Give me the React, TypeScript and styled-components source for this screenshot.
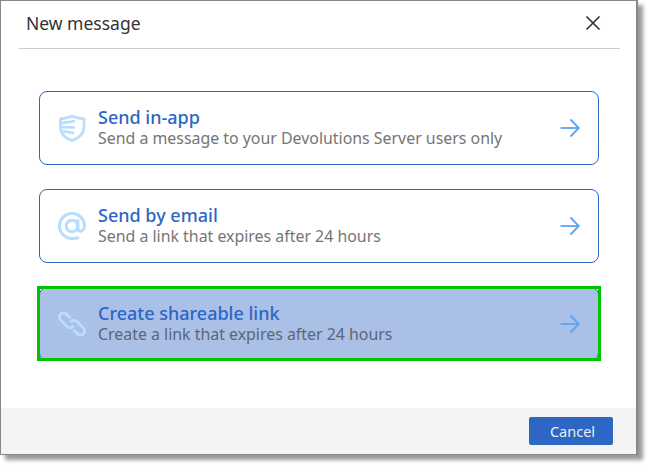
import React from 'react';
import styled, { createGlobalStyle } from 'styled-components';

const Global = createGlobalStyle`
  html, body {
    margin: 0;
    padding: 0;
    background: #fff;
    min-height: 465px;
    font-family: "Noto Sans", "Open Sans", sans-serif;
  }
`;

const Dialog = styled.div`
  box-sizing: border-box;
  width: 638px;
  height: 455px;
  border: 1px solid #888;
  border-right-width: 2px;
  background: #fff;
  display: flex;
  flex-direction: column;
  box-shadow: 5px 5px 4px rgba(0, 0, 0, 0.4);
`;

const Header = styled.div`
  box-sizing: border-box;
  height: 48px;
  margin: 0 16px 0 18px;
  padding: 0 17px 0 7px;
  border-bottom: 1px solid #ccc;
  display: flex;
  align-items: center;
  justify-content: space-between;
  flex-shrink: 0;
`;

const Title = styled.div`
  font-size: 17.5px;
  color: #333;
  margin-top: -3px;
`;

const CloseButton = styled.button`
  width: 20px;
  height: 20px;
  border: 0;
  padding: 0;
  background: none;
  display: flex;
  color: #333;
  margin-top: -4px;
`;

const Options = styled.div`
  flex: 1;
  display: flex;
  flex-direction: column;
  gap: 24px;
  padding: 42px 37px 0 38px;
`;

const Option = styled.div<{ $selected?: boolean }>`
  box-sizing: border-box;
  height: 74px;
  border: 1px solid #2d66c3;
  border-radius: 8px;
  display: flex;
  align-items: center;
  padding: 0 18px 0 18px;
  position: relative;
  background: ${(p) => (p.$selected ? '#abc0e6' : '#fff')};
  ${(p) =>
    p.$selected &&
    `&::after {
      content: '';
      position: absolute;
      top: -2px;
      left: -3px;
      right: -3px;
      bottom: -1px;
      border: 3px solid #00c400;
    }`}
`;

const OptionIcon = styled.div`
  width: 28px;
  height: 28px;
  display: flex;
  color: #b9dcff;
  margin-right: 12px;
  flex-shrink: 0;
`;

const OptionText = styled.div`
  flex: 1;
  display: flex;
  flex-direction: column;
  margin-top: -1px;
`;

const OptionTitle = styled.div`
  font-size: 18px;
  line-height: 22px;
  font-weight: 550;
  color: #2d66c3;
`;

const OptionDesc = styled.div<{ $selected?: boolean }>`
  font-size: 15.9px;
  line-height: 21px;
  color: ${(p) => (p.$selected ? '#5c6675' : '#757575')};
`;

const Arrow = styled.div`
  width: 22px;
  height: 22px;
  display: flex;
  color: #5aa5f5;
  margin-right: -1px;
`;

const Footer = styled.div`
  height: 46px;
  background: #f4f4f4;
  display: flex;
  align-items: center;
  justify-content: flex-end;
  padding-right: 23px;
  flex-shrink: 0;
`;

const CancelButton = styled.button`
  width: 84px;
  height: 28px;
  border: 0;
  border-radius: 2px;
  background: #2d66c3;
  color: #e8f0fb;
  font-family: inherit;
  font-size: 14.5px;
  padding: 0 0 0 3px;
`;

const ShieldIcon = () => (
  <svg viewBox="0.5 0.5 29 29" width="28" height="28" fill="none" stroke="currentColor" strokeWidth="2.8" strokeLinecap="round" strokeLinejoin="round">
    <path d="M15 2.5 C19 4.5 23 5 27.5 5.5 L27.5 14 C27.5 20.5 22 25.5 15 28 C8 25.5 3 20.5 3 14 L3 5.5 C7.5 5 11 4.5 15 2.5 Z" />
    <path d="M4 10 L17 8" />
    <path d="M4 14 L17 14.5" />
    <path d="M7 18.5 L16 20" />
  </svg>
);

const AtIcon = () => (
  <svg viewBox="0.5 0.5 29 29" width="28" height="28" fill="none" stroke="currentColor" strokeWidth="3.2" strokeLinecap="round">
    <circle cx="15" cy="15" r="6" />
    <path d="M21 9 L21 17 C21 20 23 21 25 20 C27 19 28 17 28 15 C28 8 22 2 15 2 C8 2 2 8 2 15 C2 22 8 28 15 28 L21 27.5" />
  </svg>
);

const LinkIcon = () => (
  <svg viewBox="0.5 0.5 29 29" width="28" height="28" fill="none" stroke="currentColor" strokeWidth="3" strokeLinecap="round">
    <path d="M12.5 8 L9 4.8 C7 3 4.5 3.2 3 5 C1.5 6.8 1.6 9.4 3.4 11.2 L10 17.6 C12 19.4 14.6 19.4 16.2 17.4" />
    <path d="M17.5 22 L21 25.2 C23 27 25.5 26.8 27 25 C28.5 23.2 28.4 20.6 26.6 18.8 L20 12.4 C18 10.6 15.4 10.6 13.8 12.6" />
  </svg>
);

const ArrowIcon = () => (
  <svg viewBox="0 0 22 22" width="22" height="22" fill="none" stroke="currentColor" strokeWidth="1.8">
    <path d="M1.5 11 L19.5 11" />
    <path d="M11.5 2.5 L19.8 11 L11.5 19.5" />
  </svg>
);

const options = [
  { id: 'app', title: 'Send in-app', desc: 'Send a message to your Devolutions Server users only', icon: <ShieldIcon /> },
  { id: 'email', title: 'Send by email', desc: 'Send a link that expires after 24 hours', icon: <AtIcon /> },
  { id: 'link', title: 'Create shareable link', desc: 'Create a link that expires after 24 hours', icon: <LinkIcon />, selected: true },
];

export default function App() {
  return (
    <>
      <Global />
      <Dialog>
        <Header>
          <Title>New message</Title>
          <CloseButton>
            <svg viewBox="0 0 20 20" width="20" height="20" fill="none" stroke="currentColor" strokeWidth="1.7">
              <path d="M3.5 3.5 L16.5 16.5 M16.5 3.5 L3.5 16.5" />
            </svg>
          </CloseButton>
        </Header>
        <Options>
          {options.map((o) => (
            <Option key={o.id} $selected={o.selected}>
              <OptionIcon>{o.icon}</OptionIcon>
              <OptionText>
                <OptionTitle>{o.title}</OptionTitle>
                <OptionDesc $selected={o.selected}>{o.desc}</OptionDesc>
              </OptionText>
              <Arrow>
                <ArrowIcon />
              </Arrow>
            </Option>
          ))}
        </Options>
        <Footer>
          <CancelButton>Cancel</CancelButton>
        </Footer>
      </Dialog>
    </>
  );
}
